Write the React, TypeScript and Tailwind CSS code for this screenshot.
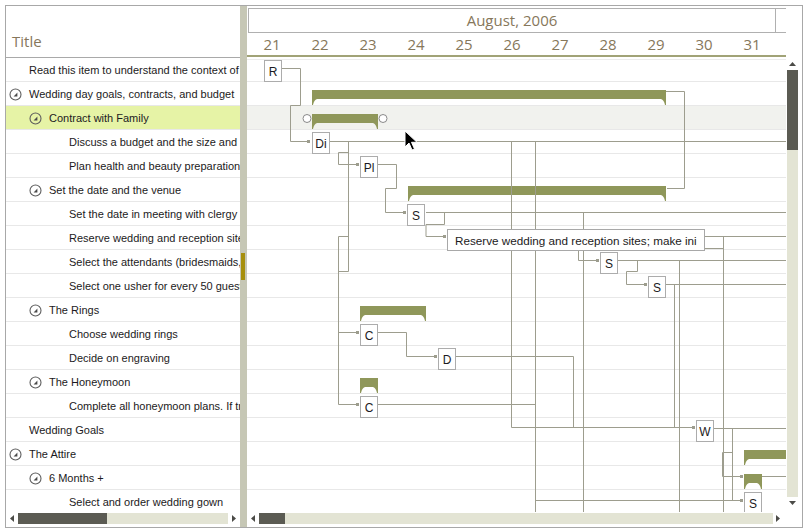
import React from "react";

type Row = { t: string; l: number; i: boolean; sel?: boolean };

const rows: Row[] = [
  { t: "Read this item to understand the context of this template", l: 0, i: false },
  { t: "Wedding day goals, contracts, and budget", l: 0, i: true },
  { t: "Contract with Family", l: 1, i: true, sel: true },
  { t: "Discuss a budget and the size and style of the wedding", l: 2, i: false },
  { t: "Plan health and beauty preparations", l: 2, i: false },
  { t: "Set the date and the venue", l: 1, i: true },
  { t: "Set the date in meeting with clergy or officiant", l: 2, i: false },
  { t: "Reserve wedding and reception sites; make initial deposits", l: 2, i: false },
  { t: "Select the attendants (bridesmaids, groomsmen)", l: 2, i: false },
  { t: "Select one usher for every 50 guests", l: 2, i: false },
  { t: "The Rings", l: 1, i: true },
  { t: "Choose wedding rings", l: 2, i: false },
  { t: "Decide on engraving", l: 2, i: false },
  { t: "The Honeymoon", l: 1, i: true },
  { t: "Complete all honeymoon plans. If traveling abroad", l: 2, i: false },
  { t: "Wedding Goals", l: 0, i: false },
  { t: "The Attire", l: 0, i: true },
  { t: "6 Months +", l: 1, i: true },
  { t: "Select and order wedding gown", l: 2, i: false },
];

const days = ["21", "22", "23", "24", "25", "26", "27", "28", "29", "30", "31"];

const LINE = "#9d9d8e";
const OLIVE = "#8f975a";

const paths = [
  "M282 68.5 H300.5 V105.5 H290.5 V141.5 H308",
  "M666 91.5 H684.5 V188.5 H667",
  "M330 141.5 H790",
  "M511.5 141.5 V427.5",
  "M535.5 141.5 V520",
  "M348.5 141.5 V271.5 H338.5",
  "M348.5 152.5 H338.5 V164.5 H357",
  "M338.5 236.5 H348.5",
  "M338.5 236.5 V404.5 H357",
  "M338.5 332.5 H357",
  "M378 164.5 H396.5 V188.5 H385.5 V212.5 H404",
  "M426 212.5 H790",
  "M426 224.5 H444.5 V212.5",
  "M426 224.5 V236.5 H444",
  "M583.5 212.5 V520",
  "M700 236.5 H790",
  "M700 248.5 H723.5",
  "M723.5 236.5 V520",
  "M578.5 248 V260.5 H597",
  "M618 260.5 H790",
  "M679.5 260.5 V520",
  "M618 260.5 H637.5 V271.5 H626.5 V284.5 H645",
  "M666 284.5 H790",
  "M674.5 284.5 V427.5",
  "M378 332.5 H406.5 V356.5 H435",
  "M456 356.5 H573.5 V427.5",
  "M378 404.5 H535.5",
  "M511.5 427.5 H693",
  "M714 428.5 H790",
  "M732.5 428.5 V500.5",
  "M722.5 452.5 V476.5 H741",
  "M722.5 452.5 H732.5",
  "M762 476.5 H790",
  "M535.5 500.5 H741",
];

const arrows: [number, number][] = [
  [309, 141.5],
  [358, 164.5],
  [405, 212.5],
  [445, 236.5],
  [598, 260.5],
  [646, 284.5],
  [358, 332.5],
  [436, 356.5],
  [358, 404.5],
  [694, 427.5],
  [742, 476.5],
  [742, 500.5],
];

const bars: [number, number, number][] = [
  [312, 666, 90],
  [312, 378, 114],
  [408, 666, 186],
  [360, 426, 306],
  [360, 378, 378],
  [744, 800, 450],
  [744, 762, 474],
];

const boxes: { x: number; y: number; t: string }[] = [
  { x: 264, y: 60, t: "R" },
  { x: 312, y: 132, t: "Di" },
  { x: 360, y: 156, t: "Pl" },
  { x: 407, y: 204, t: "S" },
  { x: 600, y: 252, t: "S" },
  { x: 648, y: 276, t: "S" },
  { x: 360, y: 324, t: "C" },
  { x: 438, y: 348, t: "D" },
  { x: 360, y: 396, t: "C" },
  { x: 696, y: 420, t: "W" },
  { x: 744, y: 492, t: "S" },
];

function barPath(x1: number, x2: number, y: number) {
  return `M${x1} ${y} H${x2} V${y + 15} L${x2 - 1} ${y + 15} Q${x2 - 2} ${y + 10} ${x2 - 5} ${y + 9} H${x1 + 5} Q${x1 + 2} ${y + 10} ${x1 + 1} ${y + 15} L${x1} ${y + 15} Z`;
}

function Collapse() {
  return (
    <svg width="13" height="13" viewBox="0 0 13 13">
      <circle cx="6.5" cy="6.5" r="5.5" fill="none" stroke="#5e5e5e" strokeWidth="1.1" />
      <path d="M8.4 4.6 V8.4 H4.6 Z" fill="#4a4a4a" />
    </svg>
  );
}

function Tri({ dir }: { dir: "l" | "r" | "u" | "d" }) {
  const d =
    dir === "l"
      ? "M5 1 L1 4.5 L5 8 Z"
      : dir === "r"
      ? "M1 1 L5 4.5 L1 8 Z"
      : dir === "u"
      ? "M1 5 L4.5 1 L8 5 Z"
      : "M1 1 L4.5 5 L8 1 Z";
  const w = dir === "l" || dir === "r" ? 6 : 9;
  const h = dir === "l" || dir === "r" ? 9 : 6;
  return (
    <svg width={w} height={h} viewBox={`0 0 ${w} ${h}`}>
      <path d={d} fill="#4b4b47" />
    </svg>
  );
}

export default function App() {
  return (
    <div className="w-[809px] h-[531px] bg-white pl-[5px] pt-[5px] font-['Liberation_Sans',Arial,sans-serif]">
      <div className="w-[798px] h-[523px] border border-[#a8a8a8] flex bg-white">
        {/* Tree panel */}
        <div className="w-[234px] flex flex-col">
          <div className="h-[52px] border-b border-[#a9a9a9] pt-[25px] pl-[6px] text-[15px] leading-[20px] text-[#86775b] font-['Open_Sans',sans-serif]">
            Title
          </div>
          <div className="h-[454px] overflow-hidden">
            {rows.map((r, idx) => (
              <div
                key={idx}
                className={`h-[24px] border-b border-[#e8e8e8] flex items-center pt-[1px] whitespace-nowrap overflow-hidden text-[11px] text-[#1c1a22] ${
                  r.sel ? "bg-[#e6f3a6]" : ""
                }`}
              >
                <div style={{ width: r.l * 20 }} className="shrink-0" />
                <div className="w-[18px] shrink-0 flex items-center justify-center">{r.i ? <Collapse /> : null}</div>
                <span className="pl-[5px]">{r.t}</span>
              </div>
            ))}
          </div>
          <div className="h-[12px] flex items-center">
            <div className="w-[10px] flex justify-end pr-[1px]">
              <Tri dir="l" />
            </div>
            <div className="ml-[2px] w-[210px] h-[11px] bg-[#e3e4d4] flex">
              <div className="w-[89px] h-full bg-[#5b5b53]" />
            </div>
            <div className="ml-[3px]">
              <Tri dir="r" />
            </div>
          </div>
        </div>

        {/* Splitter */}
        <div className="w-[7px] bg-[#c6c7b5] relative">
          <div className="absolute left-[1px] top-[247px] w-[4px] h-[27px] bg-[#a68f0c]" />
        </div>

        {/* Gantt panel */}
        <div className="flex-1 flex">
          <div className="w-[539px] flex flex-col">
            <div className="h-[52px] pt-[2px] overflow-hidden">
              <div className="flex h-[25px] ml-[1px] font-['Open_Sans',sans-serif] text-[#86775b]">
                <div className="w-[528px] shrink-0 border border-[#b0b0b0] flex items-center justify-center text-[15px]">
                  August, 2006
                </div>
                <div className="w-[40px] shrink-0 border-y border-[#b0b0b0]" />
              </div>
              <div className="flex h-[22px] ml-[1px] font-['Open_Sans',sans-serif] text-[#86775b] text-[15px]">
                {days.map((d) => (
                  <div key={d} className="w-[48px] shrink-0 flex items-center justify-center leading-none">
                    {d}
                  </div>
                ))}
              </div>
              <div className="h-[2px] bg-[#a1a377]" />
            </div>
            <div className="relative h-[454px] overflow-hidden">
              {rows.map((r, idx) => (
                <div
                  key={idx}
                  className={`h-[24px] border-b border-[#e8e8e8] ${r.sel ? "bg-[#f1f2ee]" : ""}`}
                />
              ))}
              <div className="absolute left-0 right-0 top-[1px] h-[1px] bg-[#ececec]" />
              <svg
                className="absolute left-0 top-0"
                width={539}
                height={454}
                viewBox="247 58 539 454"
              >
                {bars.map(([a, b, y], i) => (
                  <path key={i} d={barPath(a, b, y)} fill={OLIVE} />
                ))}
                <circle cx={307} cy={118.5} r={4} fill="#fff" stroke="#8a8a8a" />
                <circle cx={383} cy={118.5} r={4} fill="#fff" stroke="#8a8a8a" />
                {paths.map((p, i) => (
                  <path key={i} d={p} fill="none" stroke={LINE} strokeWidth={1} />
                ))}
                {arrows.map(([x, y], i) => (
                  <rect key={i} x={x - 2} y={y - 1.5} width={3} height={3} fill={LINE} />
                ))}
              </svg>
              {boxes.map((b, i) => (
                <div
                  key={i}
                  className="absolute w-[18px] h-[22px] border border-[#acacac] bg-white flex items-center justify-center pt-[1px] text-[12px] text-[#1c1a22]"
                  style={{ left: b.x - 247, top: b.y - 58 }}
                >
                  {b.t}
                </div>
              ))}
              <div className="absolute left-[200px] top-[171px] w-[258px] h-[22px] border border-[#a8a8a8] bg-white flex items-center pt-[1px] pl-[7px] text-[11.7px] text-[#1c1a22] whitespace-nowrap overflow-hidden">
                Reserve wedding and reception sites; make ini
              </div>
              <svg className="absolute left-[157px] top-[72px]" width="14" height="22" viewBox="0 0 14 22">
                <path d="M1 1 V17 L5 13 L8 20 L10.5 19 L7.5 12.3 L13 12.3 Z" fill="#000" stroke="#fff" strokeWidth="1" />
              </svg>
            </div>
            <div className="h-[12px] flex items-center">
              <div className="w-[9px] flex justify-end">
                <Tri dir="l" />
              </div>
              <div className="ml-[3px] w-[514px] h-[11px] bg-[#e3e4d4] flex">
                <div className="w-[26px] h-full bg-[#5b5b53]" />
              </div>
              <div className="ml-[2px]">
                <Tri dir="r" />
              </div>
            </div>
          </div>
          <div className="w-[16px] flex flex-col pt-[52px]">
            <div className="ml-[1px] w-[11px] flex flex-col">
              <div className="h-[12px] flex items-center justify-center">
                <Tri dir="u" />
              </div>
              <div className="h-[80px] bg-[#5b5b53]" />
              <div className="h-[347px] bg-[#e3e4d4]" />
              <div className="h-[12px] flex items-center justify-center">
                <Tri dir="d" />
              </div>
            </div>
          </div>
        </div>
      </div>
    </div>
  );
}
